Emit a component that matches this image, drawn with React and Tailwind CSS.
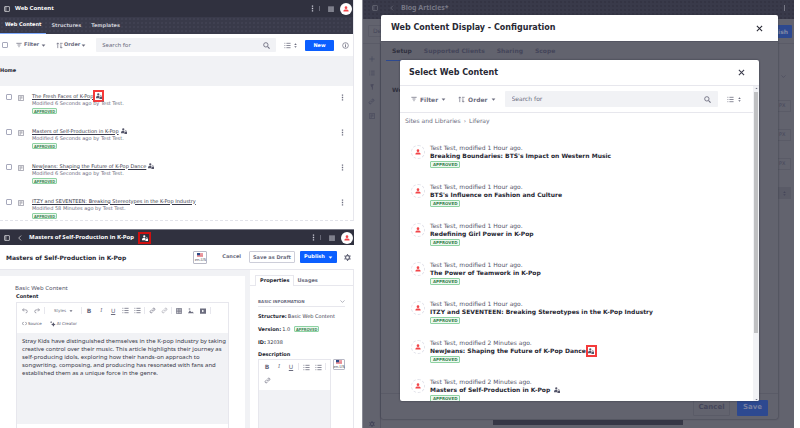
import React from "react";

const Svg = ({ children, className = "size-[7px]", box = "0 0 16 16", fill = "none" }) => (
  <svg viewBox={box} className={"shrink-0 " + className} fill={fill} stroke="currentColor" strokeWidth="1.6" aria-hidden="true">
    {children}
  </svg>
);

const PanelIcon = () => (
  <Svg className="size-[6px]"><rect x="1.5" y="1.5" width="13" height="13" rx="1" /><path d="M5 1.5v13" strokeWidth="1.400" /></Svg>
);
const FilterIcon = () => <Svg className="size-[6px]"><path d="M1 3.5h14M4 8h8M6.500 12.5h3" strokeWidth="2" /></Svg>;
const OrderIcon = () => <Svg className="size-[7px]"><path d="M4 14V2M1.500 5L4 2l2.500 3M9 3h6M9 7h4M9 11h2M12 10v4M10 12l2 2 2-2" /></Svg>;
const Caret = ({ className = "size-[5px]" }) => <Svg className={className} fill="currentColor"><path d="M2 5h12l-6 7z" stroke="none" /></Svg>;
const SearchIcon = () => <Svg className="size-[7px]"><circle cx="6.500" cy="6.500" r="5" strokeWidth="2" /><path d="M10.500 10.500L15 15" strokeWidth="2.400" /></Svg>;
const ListIcon = ({ className = "size-[7px]" }) => <Svg className={className}><path d="M1 3h2M5.500 3H15M1 8h2M5.500 8H15M1 13h2M5.500 13H15" strokeWidth="1.800" /></Svg>;
const UpDown = () => <Svg className="size-[5px]" fill="currentColor"><path d="M8 1l4 5H4zM8 15l4-5H4z" stroke="none" /></Svg>;
const InfoIcon = () => <Svg><circle cx="8" cy="8" r="6.500" /><path d="M8 7v5M8 4v2" strokeWidth="2" /></Svg>;
const DotsIcon = () => <Svg fill="currentColor"><path d="M6.500 1h3v3h-3zM6.500 6.500h3v3h-3zM6.500 12h3v3h-3z" stroke="none" /></Svg>;
const GridIcon = () => <Svg className="size-[6px]" fill="currentColor"><path d="M1 1h3.500v3.500H1zM6.250 1h3.500v3.500h-3.500zM11.500 1H15v3.500h-3.500zM1 6.250h3.500v3.500H1zM6.250 6.250h3.500v3.500h-3.500zM11.500 6.250H15v3.500h-3.500zM1 11.500h3.500V15H1zM6.250 11.500h3.500V15h-3.500zM11.500 11.500H15V15h-3.500z" stroke="none" /></Svg>;
const BackIcon = () => <Svg className="size-[6px]"><path d="M11 1.500L4.500 8l6.500 6.500" /></Svg>;
const ChevronDown = () => <Svg className="size-[5px]"><path d="M1.500 4.500L8 11l6.500-6.500" /></Svg>;
const CloseIcon = () => <Svg className="size-[7px]"><path d="M2 2l12 12M14 2L2 14" strokeWidth="2.400" /></Svg>;
const DocIcon = () => <Svg className="size-[6px]"><rect x="1" y="1" width="14" height="14" rx="1.500" /><path d="M4 5h8M4 8h8M4 11h4" /></Svg>;
const GearIcon = ({ className = "size-[7px]" }) => <Svg className={className}><circle cx="8" cy="8" r="4.500" strokeWidth="3" /><path d="M8 0v3M8 13v3M1 4l2.600 1.500M12.400 10.500L15 12M1 12l2.600-1.500M12.400 5.500L15 4" strokeWidth="2.600" /></Svg>;
const UserLockIcon = () => (
  <Svg className="size-[6px]" fill="currentColor">
    <g stroke="none"><circle cx="6" cy="3.500" r="3" /><path d="M0 13c0-4 2.500-5.500 6-5.500 1.500 0 2.500.2 3.300.8L8 9.500V14H0z" /><path d="M9 10h7v6H9z" /></g>
    <path d="M10.500 10V8.500a2 2 0 014 0V10" strokeWidth="1.300" fill="none" />
  </Svg>
);
const UserIcon = ({ className = "size-[6px]" }) => (
  <Svg className={className} fill="currentColor"><g stroke="none"><circle cx="8" cy="4.500" r="3.600" /><path d="M1 14.500c0-4 2-5.500 7-5.500s7 1.500 7 5.500z" /></g></Svg>
);
const LinkIcon = () => <Svg><path d="M7 9.500l4-4M6 6.500L3 9.500a2.500 2.500 0 003.500 3.500l2.500-2.500M7 5.500L9.500 3A2.500 2.500 0 0113 6.500L10 9.500" /></Svg>;
const FlagIcon = () => (
  <svg viewBox="0 0 12 8" className="h-[4px] w-[6px] shrink-0" aria-hidden="true">
    <path d="M0 0h12v8H0z" fill="#fff" /><path d="M0 .6h12M0 2.800h12M0 5h12M0 7.200h12" stroke="#d6424e" strokeWidth="1.200" /><path d="M0 0h6v4.500H0z" fill="#2b4a86" />
  </svg>
);

const RedBox = ({ children }) => (
  <span className="flex h-[12px] w-[11px] shrink-0 items-center justify-center border-2 border-[#f43a3a] text-[#55566a]">{children}</span>
);
const Badge = ({ compact = false }) => (
  <span className={"flex w-fit items-center rounded-[1px] border border-[#8fd3a3] bg-[#edf9f0] text-[4px] leading-[5px] font-bold text-[#38824f] " + (compact ? "h-[6px] px-px [font-family:'Noto_Sans',sans-serif]" : "h-[7px] px-[2px]")}>APPROVED</span>
);
const IconButton = ({ label, children }) => (
  <button aria-label={label} className="flex w-[8px] shrink-0 justify-center">{children}</button>
);

const HeaderActions = () => (
  <div className="ml-auto flex items-center gap-[2px] pr-px text-[#cdced9]">
    <IconButton label="Options"><DotsIcon /></IconButton>
    <span className="mr-[5px] ml-px h-[5px] w-px bg-[#666775]" />
    <IconButton label="Applications"><GridIcon /></IconButton>
    <button aria-label="User" className="ml-[3px] flex size-[12px] items-center justify-center rounded-full bg-white text-[#f2464a]"><UserIcon /></button>
  </div>
);

const articles = [
  ["The Fresh Faces of K-Pop", "Modified 6 Seconds ago by Test Test.", "boxed"],
  ["Masters of Self-Production in K-Pop", "Modified 6 Seconds ago by Test Test.", "locked"],
  ["NewJeans: Shaping the Future of K-Pop Dance", "Modified 6 Seconds ago by Test Test.", "locked"],
  ["ITZY and SEVENTEEN: Breaking Stereotypes in the K-Pop Industry", "Modified 58 Minutes ago by Test Test.", ""],
];

function ContentList() {
  return (
    <section className="border-r border-[#e7e7ed]">
      <header className="bg-[#30313f] text-white">
        <div className="flex h-[17px] items-center pl-[4px]">
          <PanelIcon />
          <h1 className="ml-[5px] text-[6px] font-bold [font-family:'Noto_Sans',sans-serif]">Web Content</h1>
          <HeaderActions />
        </div>
        <nav className="flex h-[17px] items-stretch bg-[#393a4a] bg-[radial-gradient(#444556_0.5px,transparent_1px)] bg-[size:4px_4px] text-[5px] font-bold text-[#c9cad3]">
          <a href="#content" className="flex items-center border-b border-[#80acff] px-[5px] text-white">Web Content</a>
          <a href="#structures" className="flex items-center px-[5px]">Structures</a>
          <a href="#templates" className="flex items-center px-[5px]">Templates</a>
        </nav>
      </header>
      <div className="flex h-[22px] items-center pr-[4px] pl-[2px] text-[#6b6c7e]">
        <input type="checkbox" aria-label="Select all" className="size-[6px] appearance-none rounded-[1px] border border-[#a7a9bc] bg-white" />
        <button className="ml-[8px] flex items-center gap-[2px] text-[5px] font-bold"><FilterIcon />Filter<Caret /></button>
        <button className="ml-[10px] flex items-center gap-px text-[5px] font-bold"><OrderIcon />Order<Caret /></button>
        <div className="ml-[10px] flex h-[14px] min-w-0 flex-1 items-center rounded-[1px] bg-[#f1f2f5] px-[6px]">
          <input aria-label="Search content" placeholder="Search for" className="min-w-0 flex-1 text-[6px] leading-[8px] outline-none [font-family:'Noto_Sans',sans-serif] placeholder:text-[#6b6c7e]" />
          <SearchIcon />
        </div>
        <button aria-label="View as list" className="ml-[8px] flex items-center gap-[2px]"><ListIcon /><UpDown /></button>
        <button className="mr-[7px] ml-[7px] h-[11px] w-[29px] rounded-[1px] bg-[#0b5fff] text-[5px] leading-[11px] font-bold text-white">New</button>
        <IconButton label="Info"><InfoIcon /></IconButton>
      </div>
      <div className="flex h-[30px] items-center bg-[#f1f2f5] text-[5px] font-bold text-[#272833]">Home</div>
      <ul className="h-[135px] overflow-hidden border-b border-dashed border-[#e2e3ea]">
        {articles.map(([title, meta, mark]) => (
          <li key={title} className="flex h-[35px] items-start pt-[6px] pr-[7px] pl-[6px]">
            <input type="checkbox" aria-label={title} className="mt-[2px] size-[6px] appearance-none rounded-[1px] border border-[#a7a9bc] bg-white" />
            <span className="mt-[3px] ml-[6px] text-[#6b6c7e]"><DocIcon /></span>
            <div className="ml-[8px] flex-1 text-[5px] leading-[8px] text-[#6b6c7e]">
              <div className="flex h-[7px] items-center text-[#393a4a]">
                <a href="#article" className="leading-[6px] underline">{title}</a>
                {mark === "boxed" && <RedBox><UserLockIcon /></RedBox>}
                {mark === "locked" && <span className="ml-[2px] text-[#55566a]"><UserLockIcon /></span>}
              </div>
              <p className="mb-px">{meta}</p>
              <Badge compact />
            </div>
            <span className="mt-[2px] text-[#6b6c7e]"><IconButton label="Actions"><DotsIcon /></IconButton></span>
          </li>
        ))}
      </ul>
    </section>
  );
}

const Divider = () => <span className="mx-px h-[7px] w-px shrink-0 bg-[#e7e7ed]" />;
const Tool = ({ label, children }) => (
  <button aria-label={label} className="flex h-[8px] w-[12px] shrink-0 items-center justify-center text-[6px] leading-[8px]">{children}</button>
);
const FlagButton = ({ className = "" }) => (
  <button className={"flex flex-col items-center justify-center gap-px rounded-[1px] border border-[#b8b9c6] bg-white text-[4px] leading-[4px] whitespace-nowrap text-[#393a4a] [font-family:'Noto_Sans',sans-serif] " + className}>
    <FlagIcon />en-US
  </button>
);

function Editor() {
  return (
    <section className="flex min-h-0 flex-1 flex-col">
      <header className="flex h-[16px] shrink-0 items-center border-t border-[#777885] bg-[#30313f] pl-[4px] text-white">
        <PanelIcon />
        <button aria-label="Back" className="ml-[7px]"><BackIcon /></button>
        <h2 className="ml-[6px] text-[6px] font-bold [font-family:'Noto_Sans',sans-serif]">Masters of Self-Production in K-Pop</h2>
        <span className="ml-[4px] flex h-[12px] w-[13px] items-center justify-center border-2 border-[#cf1010]"><UserLockIcon /></span>
        <HeaderActions />
      </header>
      <div className="flex h-[25px] shrink-0 items-center border-b border-[#e7e7ed] pr-[2px] pl-[6px]">
        <h2 className="text-[6px] font-bold text-[#272833]">Masters of Self-Production in K-Pop</h2>
        <FlagButton className="ml-auto h-[13px] w-[14px]" />
        <button className="ml-[15px] text-[5px] font-bold text-[#6b6c7e]">Cancel</button>
        <button className="ml-[8px] h-[12px] w-[46px] rounded-[1px] border border-[#cdced9] text-[5px] leading-[10px] font-bold text-[#6b6c7e]">Save as Draft</button>
        <button className="ml-[5px] flex h-[12px] w-[37px] items-center justify-center gap-[3px] rounded-[1px] bg-[#0b5fff] text-[5px] font-bold text-white">Publish<Caret /></button>
        <button aria-label="Settings" className="mr-px ml-[7px] text-[#6b6c7e]"><GearIcon /></button>
      </div>
      <div className="flex min-h-0 flex-1 bg-[#f1f2f5] text-[5px] leading-[8px] text-[#393a4a]">
        <div className="mt-[6px] mr-[5px] flex min-w-0 flex-1 flex-col bg-white pt-[8px] pr-[16px] pl-[16px]">
          <p className="-ml-px text-[6px] leading-[8px] text-[#55566a] [font-family:'Noto_Sans',sans-serif]">Basic Web Content</p>
          <h3 className="font-bold text-[#272833]">Content</h3>
          <div className="mt-[2px] flex min-h-0 flex-1 flex-col border border-b-0 border-[#e7e7ed]">
            <div className="flex h-[15px] items-center pl-[2px] text-[#6b6c7e]">
              <Tool label="Undo"><Svg className="size-[6px]"><path d="M5 1L1.500 5 5 9M1.500 5H10a4 4 0 010 8" /></Svg></Tool>
              <Tool label="Redo"><Svg className="size-[6px]"><path d="M11 1l3.500 4L11 9M14.500 5H6a4 4 0 000 8" /></Svg></Tool>
              <Divider />
              <button className="mr-[7px] ml-[8px] flex items-center gap-[3px] text-[4px]">Styles<Caret className="size-[4px]" /></button>
              <Divider />
              <Tool label="Bold"><b>B</b></Tool>
              <Tool label="Italic"><i className="font-serif">I</i></Tool>
              <Tool label="Underline"><span className="underline">U</span></Tool>
              <Tool label="Numbered list"><ListIcon /></Tool>
              <Tool label="Bulleted list"><ListIcon /></Tool>
              <Divider />
              <Tool label="Link"><LinkIcon /></Tool>
              <Tool label="Unlink"><span className="opacity-60"><LinkIcon /></span></Tool>
              <Divider />
              <Tool label="Table"><Svg className="size-[6px]"><path d="M1 1h14v14H1zM1 5.500h14M1 10h14M6 1v14M10.500 1v14" strokeWidth="2" /></Svg></Tool>
              <Tool label="Image"><Svg className="size-[6px]" fill="currentColor"><path d="M0 14l5-8 4 5 2-2 5 5zM2 1h4v3H2z" stroke="none" /></Svg></Tool>
              <Tool label="Video"><Svg className="size-[6px]" fill="currentColor"><path fillRule="evenodd" d="M0 1h16v14H0zM5.500 4.500v7L11.500 8z" stroke="none" /></Svg></Tool>
              <Divider />
            </div>
            <div className="flex h-[15px] items-center gap-[8px] pb-[4px] pl-[5px] text-[4px] text-[#55566a]">
              <button className="flex items-center gap-px"><Svg className="size-[5px]"><path d="M5 3L1 8l4 5M11 3l4 5-4 5" strokeWidth="2" /></Svg>Source</button>
              <button className="flex items-center gap-px"><Svg className="size-[6px]" fill="currentColor"><path d="M9 3l2 4 4 2-4 2-2 4-2-4-4-2 4-2zM3 0l1 2 2 1-2 1-1 2-1-2-2-1 2-1z" stroke="none" /></Svg>AI Creator</button>
            </div>
            <div className="mb-[4px] flex-1 bg-[#f1f2f5] px-[5px] pt-[4px]">
              <p className="text-[6px] leading-[8px] whitespace-nowrap [font-family:'Noto_Sans',sans-serif]">
                Stray Kids have distinguished themselves in the K-pop industry by taking<br />
                creative control over their music. This article highlights their journey as<br />
                self-producing idols, exploring how their hands-on approach to<br />
                songwriting, composing, and producing has resonated with fans and<br />
                established them as a unique force in the genre.
              </p>
            </div>
          </div>
        </div>
        <aside className="flex w-[104px] shrink-0 flex-col border-r border-[#e7e7ed] bg-white">
          <nav className="mt-[5px] flex h-[11px] shrink-0 border-b border-[#e7e7ed] pl-[5px] text-[5px] font-bold text-[#6b6c7e]">
            <a href="#properties" className="-mb-px h-[11px] border border-b-0 border-[#e7e7ed] bg-white px-[4px] text-[#272833]">Properties</a>
            <a href="#usages" className="px-[3px] pt-px">Usages</a>
          </nav>
          <div className="flex min-h-0 flex-1 flex-col pt-[11px] pr-[8px] pl-[8px]">
            <button className="flex h-[10px] shrink-0 items-center justify-between border-b border-[#e7e7ed] text-[4px] font-bold text-[#6b6c7e]">BASIC INFORMATION<ChevronDown /></button>
            <dl className="mt-[5px] flex flex-col gap-[5px]">
              <div className="flex gap-px"><dt className="font-bold text-[#272833]">Structure:</dt><dd>Basic Web Content</dd></div>
              <div className="flex items-center gap-px"><dt className="font-bold text-[#272833]">Version:</dt><dd className="flex items-center gap-[4px]">1.0 <Badge compact /></dd></div>
              <div className="flex gap-px"><dt className="font-bold text-[#272833]">ID:</dt><dd>32038</dd></div>
            </dl>
            <h3 className="mt-[4px] font-bold text-[#272833]">Description</h3>
            <div className="mt-px flex min-h-0 flex-1 items-start gap-[2px]">
              <div className="flex flex-1 flex-col self-stretch border border-b-0 border-[#e7e7ed]">
                <div className="flex h-[30px] shrink-0 flex-wrap content-start gap-y-[5px] pt-[3px] pl-[2px] text-[#6b6c7e]">
                  <Tool label="Bold"><b>B</b></Tool>
                  <Tool label="Italic"><i className="font-serif">I</i></Tool>
                  <Tool label="Underline"><span className="underline">U</span></Tool>
                  <Divider />
                  <Tool label="Numbered list"><ListIcon /></Tool>
                  <Tool label="Bulleted list"><ListIcon /></Tool>
                  <Divider />
                  <Tool label="Link"><LinkIcon /></Tool>
                </div>
                <div className="flex-1 bg-[#f1f2f5]" />
              </div>
              <FlagButton className="h-[11px] w-[12px] shrink-0" />
            </div>
          </div>
        </aside>
      </div>
    </section>
  );
}

const entries = [
  ["1 Hour", "Breaking Boundaries: BTS's Impact on Western Music", ""],
  ["1 Hour", "BTS's Influence on Fashion and Culture", ""],
  ["1 Hour", "Redefining Girl Power in K-Pop", ""],
  ["1 Hour", "The Power of Teamwork in K-Pop", ""],
  ["1 Hour", "ITZY and SEVENTEEN: Breaking Stereotypes in the K-Pop Industry", ""],
  ["2 Minutes", "NewJeans: Shaping the Future of K-Pop Dance", "boxed"],
  ["2 Minutes", "Masters of Self-Production in K-Pop", "locked"],
];

function SelectDialog() {
  return (
    <div role="dialog" aria-label="Select Web Content" className="absolute top-[60px] right-[35px] bottom-[27px] left-[37px] flex flex-col overflow-hidden rounded-[2px] bg-white shadow-[0_0_2px_#30313f]">
      <div className="flex h-[26px] shrink-0 items-center justify-between border-b border-[#e7e7ed] pr-[14px] pl-[9px]">
        <h2 className="text-[8px] font-bold text-[#272833]">Select Web Content</h2>
        <button aria-label="Close" className="text-[#393a4a]"><CloseIcon /></button>
      </div>
      <div className="flex min-h-0 flex-1">
        <div className="min-w-0 flex-1 overflow-hidden">
          <div className="flex h-[27px] items-center border-b border-[#e7e7ed] pr-[11px] pl-[11px] text-[#6b6c7e]">
            <button className="flex items-center gap-[3px] text-[6px] font-bold"><FilterIcon />Filter<Caret /></button>
            <button className="ml-[12px] flex items-center gap-[3px] text-[6px] font-bold"><OrderIcon />Order<Caret /></button>
            <div className="ml-[9px] flex h-[16px] min-w-0 flex-1 items-center rounded-[1px] bg-[#f1f2f5] px-[7px]">
              <input aria-label="Search web content" placeholder="Search for" className="min-w-0 flex-1 text-[6px] leading-[8px] outline-none placeholder:text-[#6b6c7e]" />
              <SearchIcon />
            </div>
            <button aria-label="View as list" className="ml-[9px] flex items-center gap-[3px]"><ListIcon /><UpDown /></button>
          </div>
          <nav aria-label="Breadcrumb" className="flex gap-[3px] px-[5px] pt-[4px] text-[6px] leading-[8px] text-[#6b6c7e]">
            <a href="#sites">Sites and Libraries</a><span>›</span><a href="#liferay">Liferay</a>
          </nav>
          <ul className="mt-[19px]">
            {entries.map(([age, title, mark]) => (
              <li key={title} className="flex h-[39px] items-start gap-[5px] pl-[11px]">
                <span className="mt-px flex size-[14px] items-center justify-center rounded-full border border-dashed border-[#e2e3ea] text-[#f2464a]"><UserIcon /></span>
                <div className="text-[6px] leading-[8px] text-[#55566a]">
                  <p>Test Test, modified {age} ago.</p>
                  <div className="mb-px flex h-[8px] items-center text-[#272833]">
                    <a href="#entry" className="font-bold">{title}</a>
                    {mark === "boxed" && <RedBox><UserLockIcon /></RedBox>}
                    {mark === "locked" && <span className="ml-[4px] text-[#55566a]"><UserLockIcon /></span>}
                  </div>
                  <Badge />
                </div>
              </li>
            ))}
          </ul>
        </div>
        <div className="flex w-[6px] shrink-0 flex-col items-center bg-[#f1f2f5] text-[#6b6c7e]">
          <span className="flex h-[6px] rotate-180 items-center"><Caret className="size-[3px]" /></span>
          <div className="w-[4px] flex-[241] bg-[#bfc0c2]" />
          <div className="flex flex-[68] items-end"><Caret className="size-[3px]" /></div>
        </div>
      </div>
    </div>
  );
}

function PageEditor() {
  return (
    <section className="relative flex min-h-0 flex-col overflow-hidden border-l border-[#8a8b95] bg-[#62636e] text-[#45465a]">
      <header className="flex h-[19px] shrink-0 items-center bg-[#393a4a] bg-[radial-gradient(#30313f_0.5px,transparent_1px)] bg-[size:4px_4px] pr-[9px] pb-[3px] pl-[9px] text-[#777885]">
        <PanelIcon /><span className="ml-[11px]"><BackIcon /></span>
        <h2 className="ml-[6px] text-[7px] font-bold [font-family:'Noto_Sans',sans-serif]">Blog Articles*</h2>
        <span className="ml-auto h-[6px] w-px bg-[#777885]" />
      </header>
      <div className="flex h-[25px] shrink-0 items-center justify-between border-b border-[#5a5b67] pr-[2px] pl-[5px] text-[6px]">
        <span className="w-[24px] rounded-[1px] border border-[#5a5b67] px-[4px] leading-[10px]">De</span>
        <button className="h-[13px] w-[37px] rounded-[1px] bg-[#2d4990] pr-[4px] text-right font-bold text-[#8088a5]">Publish</button>
      </div>
      <div className="flex min-h-0 flex-1 justify-between">
        <nav aria-label="Tools" className="flex w-[18px] flex-col items-center gap-[8px] border-r border-[#555663] pt-[12px] pb-px">
          <Svg className="size-[6px]"><path d="M8 1v14M1 8h14" /></Svg>
          <ListIcon className="size-[6px]" />
          <Svg className="size-[6px]"><path d="M9 15V2M4 2h9M9 8a3 3 0 010-6" strokeWidth="2" /></Svg>
          <LinkIcon />
          <DocIcon />
          <span className="mt-auto"><GearIcon className="size-[6px]" /></span>
        </nav>
        <aside className="flex w-[17px] flex-col items-end gap-[17px] pt-[30px] pr-[3px] text-[5px]">
          <span className="pr-[5px] pb-[4px]"><ChevronDown /></span>
          <span className="flex h-[12px] w-[14px] items-center border border-[#5a5b67] pl-px">PX</span>
          <span className="flex h-[12px] w-[14px] items-center border border-[#5a5b67] pl-px">PX</span>
          <span className="flex h-[12px] w-[14px] items-center border border-[#5a5b67] pl-px">PX</span>
          <span className="flex h-[12px] w-[14px] items-center justify-center bg-[#5a5b67]"><UpDown /></span>
        </aside>
      </div>
      <div className="absolute right-[111px] bottom-[3px] left-[130px] h-[5px] bg-[#363746]" />

      <div role="dialog" aria-label="Web Content Display - Configuration" className="absolute top-[15px] right-[16px] bottom-[9px] left-[18px] flex flex-col overflow-hidden rounded-[2px] bg-[#62636e] shadow-[0_0_2px_#30313f]">
        <div className="flex h-[26px] shrink-0 items-center justify-between bg-white pr-[15px] pl-[10px] text-[#272833]">
          <h2 className="text-[8px] font-bold">Web Content Display - Configuration</h2>
          <button aria-label="Close"><CloseIcon /></button>
        </div>
        <nav className="flex h-[20px] shrink-0 border-t border-[#555663] pl-[5px] text-[6px] leading-[18px] font-bold">
          <a href="#setup" className="border-b border-[#2d4990] px-[6px] text-[#30313f]">Setup</a>
          <a href="#clients" className="px-[6px]">Supported Clients</a>
          <a href="#sharing" className="px-[6px]">Sharing</a>
          <a href="#scope" className="px-[6px]">Scope</a>
        </nav>
        <p className="mt-[24px] pl-[11px] text-[6px] font-bold text-[#30313f]">We</p>
        <div className="mt-auto flex h-[26px] shrink-0 items-center justify-end gap-[7px] border-t border-[#5a5b67] pt-[2px] pr-[10px] text-[7px] font-bold">
          <button className="h-[16px] w-[37px] rounded-[1px] border border-[#5a5b67]">Cancel</button>
          <button className="h-[16px] w-[31px] rounded-[1px] bg-[#2d4990] text-[#777fa0]">Save</button>
        </div>
      </div>
      <SelectDialog />
    </section>
  );
}

export default function App() {
  return (
    <main className="grid h-screen grid-cols-[354fr_432fr] gap-[8px] overflow-hidden bg-white pr-[6px] [font-family:'DejaVu_Sans',sans-serif]">
      <div className="flex min-h-0 min-w-0 flex-col gap-[8px]">
        <ContentList />
        <Editor />
      </div>
      <PageEditor />
    </main>
  );
}
